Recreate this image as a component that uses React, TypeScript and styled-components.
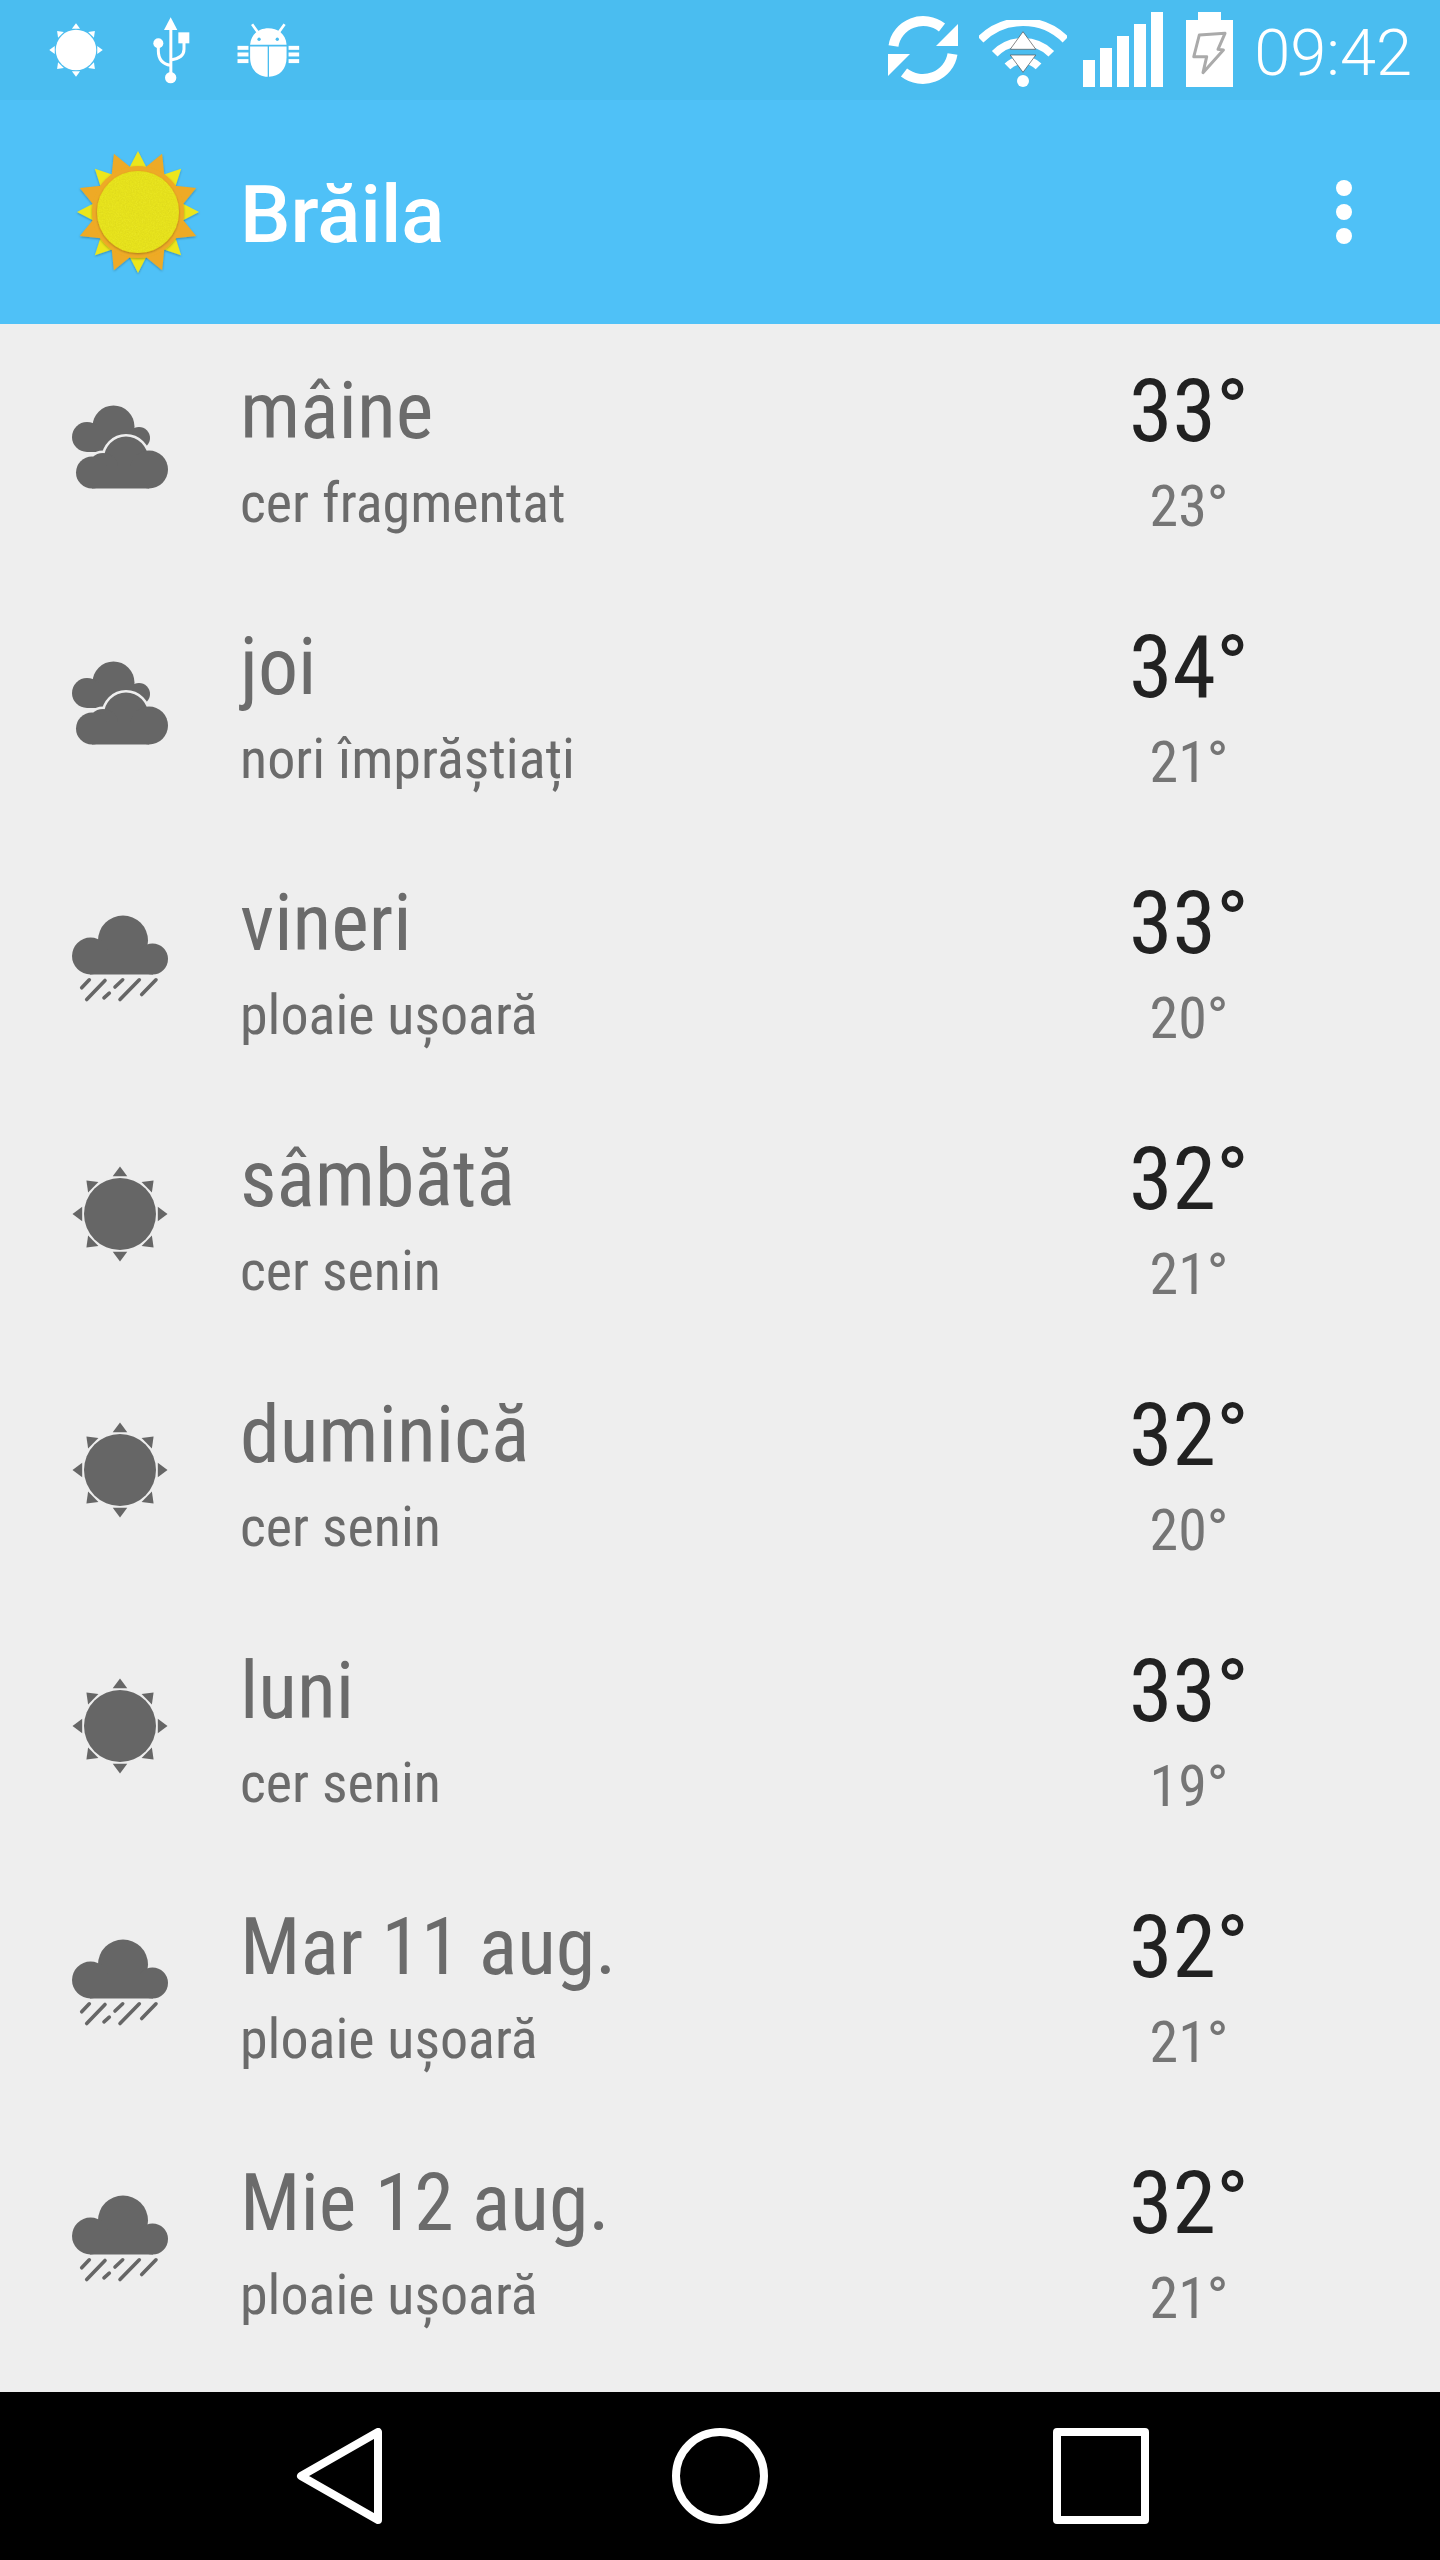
import React from 'react'
import styled, { createGlobalStyle } from 'styled-components'

const GlobalStyle = createGlobalStyle`
  html, body {
    margin: 0;
    padding: 0;
    background: #eeeeee;
  }
`

const Screen = styled.div`
  width: 1440px;
  height: 2560px;
  display: flex;
  flex-direction: column;
  background: #eeeeee;
  font-family: Roboto, "Liberation Sans", sans-serif;
  overflow: hidden;
`

const StatusBar = styled.div`
  height: 100px;
  flex: none;
  display: flex;
  justify-content: space-between;
  background: #4abdf0;
  padding: 0 28px 0 49px;
  color: #fff;
`

const LeftIcons = styled.div`
  display: flex;
  align-items: center;
  gap: 44px;
`

const RightIcons = styled.div`
  display: flex;
  align-items: flex-end;
  gap: 16px;
  padding-bottom: 13px;
`

const Clock = styled.span`
  font-size: 65px;
  font-weight: 300;
  line-height: 68px;
`

const AppBar = styled.div`
  height: 224px;
  flex: none;
  display: flex;
  align-items: center;
  background: #4fc1f7;
  padding: 0 88px 0 72px;
`

const Title = styled.h1`
  margin: 6px 0 0 36px;
  flex: 1;
  color: #fff;
  font-size: 80px;
  font-weight: 500;
`

const Overflow = styled.div`
  display: flex;
  flex-direction: column;
  gap: 8px;
`

const Dot = styled.span`
  width: 16px;
  height: 16px;
  border-radius: 50%;
  background: #fff;
`

const List = styled.div`
  flex: 1;
  display: flex;
  flex-direction: column;
`

const Row = styled.div`
  height: 256px;
  flex: none;
  display: flex;
  align-items: center;
  padding: 0 163px 0 72px;
`

const IconBox = styled.div`
  width: 96px;
  height: 96px;
  flex: none;
  margin-bottom: 13px;
  color: #666;
`

const TextCol = styled.div`
  flex: 1;
  margin: 2px 0 0 72px;
  display: flex;
  flex-direction: column;
  gap: 12px;
`

const Day = styled.div`
  color: #6b6b6b;
  font-size: 80px;
  line-height: 88px;
  font-stretch: 75%;
`

const Description = styled.div`
  color: #6b6b6b;
  font-size: 56px;
  line-height: 72px;
  font-stretch: 75%;
`

const TempCol = styled.div`
  width: 176px;
  margin-top: 3px;
  display: flex;
  flex-direction: column;
  align-items: center;
  gap: 13px;
  font-stretch: 75%;
`

const High = styled.div`
  color: #212121;
  font-size: 88px;
  line-height: 92px;
`

const Low = styled.div`
  color: #757575;
  font-size: 58px;
  line-height: 72px;
`

const NavBar = styled.div`
  height: 168px;
  flex: none;
  display: flex;
  justify-content: center;
  gap: 285px;
  padding-top: 36px;
  box-sizing: border-box;
  background: #000;
`

const spikes = (count: number, start: number, tip: number, base: number, half: number) => {
  const out: string[] = []
  for (let i = 0; i < count; i++) {
    const a = start + (i * 2 * Math.PI) / count
    const pt = (r: number, o: number) =>
      `${(r * Math.sin(a + o)).toFixed(2)},${(-r * Math.cos(a + o)).toFixed(2)}`
    out.push(`${pt(base, -half)} ${pt(tip, 0)} ${pt(base, half)}`)
  }
  return out
}

const SunIcon = ({ size = 96 }: { size?: number }) => (
  <svg width={size} height={size} viewBox="-48 -48 96 96" fill="currentColor">
    <circle r="36" />
    {spikes(8, 0, 47.5, 38.5, 0.19).map(p => <polygon key={p} points={p} />)}
  </svg>
)

const FrontCloud = () => (
  <>
    <circle cx="54" cy="60.5" r="22" />
    <circle cx="31" cy="70" r="15" />
    <circle cx="20" cy="74.5" r="16" />
    <circle cx="77" cy="71.5" r="19" />
    <rect x="20" y="68" width="57" height="22.5" />
  </>
)

const CloudsIcon = () => (
  <svg width="96" height="96" viewBox="0 0 96 96" fill="currentColor">
    <circle cx="41.5" cy="28.5" r="21" />
    <circle cx="15" cy="39" r="15" />
    <circle cx="67" cy="40" r="11" />
    <rect x="15" y="30" width="50" height="24" />
    <g stroke="#eeeeee" strokeWidth="5"><FrontCloud /></g>
    <FrontCloud />
  </svg>
)

const RainIcon = () => (
  <svg width="96" height="96" viewBox="0 0 96 96" fill="currentColor">
    <circle cx="51" cy="30.5" r="25" />
    <circle cx="18.5" cy="46" r="18.5" />
    <circle cx="80.5" cy="49" r="15.5" />
    <rect x="18" y="40" width="63" height="24.5" />
    <g stroke="currentColor" strokeWidth="3.6" strokeLinecap="round">
      <line x1="9.7" y1="77.8" x2="17.3" y2="69.8" />
      <line x1="14.7" y1="89.5" x2="33" y2="70.5" />
      <line x1="32" y1="87.8" x2="37.3" y2="83.2" />
      <line x1="43" y1="77" x2="50.7" y2="69.8" />
      <line x1="48" y1="89.5" x2="67.3" y2="69.8" />
      <line x1="69.7" y1="84.5" x2="84" y2="69.8" />
    </g>
  </svg>
)

const UsbIcon = () => (
  <svg width="46" height="70" viewBox="441 45 138 210" fill="#fff">
    <polygon points="512,52 532,90 492,90" />
    <rect x="508" y="88" width="9" height="145" />
    <circle cx="512" cy="233" r="17" />
    <circle cx="475" cy="130" r="15" />
    <rect x="535" y="97" width="33" height="33" />
    <path d="M475 135 V152 Q475 190 512 196 M552 128 V148 Q552 175 512 180" fill="none" stroke="#fff" strokeWidth="9" />
  </svg>
)

const BugIcon = () => (
  <svg width="65" height="58" viewBox="711 60 195 175" fill="#fff">
    <path d="M750 132 C752 98 778 82 805 82 C832 82 858 98 860 132 Z" />
    <path d="M750 137 H803 V228 C772 228 750 205 750 170 Z" />
    <path d="M807 137 H860 V170 C860 205 838 228 807 228 Z" />
    <path d="M756 70 L775 96 M854 70 L835 96" stroke="#fff" strokeWidth="8" />
    <circle cx="777" cy="115" r="5" fill="#4abdf0" />
    <circle cx="832" cy="115" r="5" fill="#4abdf0" />
    <rect x="712" y="135" width="33" height="12" />
    <rect x="712" y="155" width="33" height="12" />
    <rect x="712" y="175" width="33" height="12" />
    <rect x="866" y="135" width="32" height="12" />
    <rect x="866" y="155" width="32" height="12" />
    <rect x="866" y="175" width="32" height="12" />
  </svg>
)

const SyncHalf = () => (
  <>
    <path d="M5.5 30 A30 29 0 0 1 54 11.5" fill="none" stroke="#fff" strokeWidth="10" />
    <polygon points="70,8 70,30 48,30" />
  </>
)

const SyncIcon = () => (
  <svg width="75" height="71" viewBox="0 0 75 71" fill="#fff">
    <SyncHalf />
    <g transform="rotate(180 35 34)"><SyncHalf /></g>
  </svg>
)

const arc = (r: number) => {
  const d = r * Math.SQRT1_2
  return `M${44 - d} ${62 - d} A${r} ${r} 0 0 1 ${44 + d} ${62 - d}`
}

const WifiIcon = () => (
  <svg width="88" height="67" viewBox="0 0 88 67" fill="#fff">
    {[60, 40, 22].map(r => <path key={r} d={arc(r)} fill="none" stroke="#fff" strokeWidth="8" />)}
    <circle cx="44" cy="61" r="6" />
    <polygon points="44,11.7 56.8,29.3 31.2,29.3" stroke="#555" strokeWidth="0.7" />
    <polygon points="31.2,35 56.8,35 44,52.3" stroke="#555" strokeWidth="0.7" />
  </svg>
)

const SignalIcon = () => (
  <svg width="87" height="75" viewBox="0 0 87 75" fill="#fff">
    {[48, 36, 24, 12, 0].map((top, i) => (
      <rect key={top} x={i * 17} y={top} width="12" height={75 - top} />
    ))}
  </svg>
)

const BatteryIcon = () => (
  <svg width="52" height="75" viewBox="0 0 52 75" fill="#fff">
    <rect x="12" y="0" width="23" height="9" />
    <rect x="0" y="8" width="47" height="67" />
    <polygon
      points="13.3,23 39,21.3 32,37.3 37.4,38 17,60.7 20.7,44.7 7.8,44.7"
      stroke="#aaa"
      strokeWidth="3"
      strokeLinejoin="round"
    />
  </svg>
)

const FeltSun = () => (
  <svg width="132" height="132" viewBox="-66 -66 132 132">
    <defs>
      <filter id="felt" x="-20%" y="-20%" width="140%" height="140%">
        <feDropShadow dx="0" dy="1" stdDeviation="1" floodColor="#000" floodOpacity="0.3" />
      </filter>
      <filter id="grain" x="0" y="0" width="100%" height="100%">
        <feTurbulence type="fractalNoise" baseFrequency="0.7" numOctaves="2" seed="3" />
        <feColorMatrix values="0 0 0 0 0.55  0 0 0 0 0.5  0 0 0 0 0  0 0 0 0.5 -0.16" />
        <feComposite in2="SourceGraphic" operator="in" />
        <feMerge>
          <feMergeNode in="SourceGraphic" />
          <feMergeNode />
        </feMerge>
      </filter>
    </defs>
    <g filter="url(#felt)">
      {spikes(8, 0, 61, 42, 0.25).map(p => <polygon key={p} points={p} fill="#ece61f" />)}
    </g>
    <g filter="url(#felt)">
      {spikes(8, Math.PI / 8, 63, 42, 0.3).map(p => <polygon key={p} points={p} fill="#eeaa25" />)}
      <circle r="46" fill="#eeaa25" />
    </g>
    <g filter="url(#felt)">
      <circle r="41" fill="#e8e420" filter="url(#grain)" />
    </g>
  </svg>
)

const BackIcon = () => (
  <svg width="96" height="96" viewBox="0 0 96 96" fill="none" stroke="#fff" strokeWidth="8" strokeLinejoin="round">
    <path d="M10 48 L87 4 V92 Z" />
  </svg>
)

const HomeIcon = () => (
  <svg width="96" height="96" viewBox="0 0 96 96" fill="none" stroke="#fff" strokeWidth="8">
    <circle cx="48" cy="48" r="44" />
  </svg>
)

const RecentIcon = () => (
  <svg width="96" height="96" viewBox="0 0 96 96" fill="none" stroke="#fff" strokeWidth="8" strokeLinejoin="round">
    <rect x="4" y="4" width="88" height="88" />
  </svg>
)

const forecast = [
  { day: 'mâine', text: 'cer fragmentat', high: 33, low: 23, icon: CloudsIcon },
  { day: 'joi', text: 'nori împrăștiați', high: 34, low: 21, icon: CloudsIcon },
  { day: 'vineri', text: 'ploaie ușoară', high: 33, low: 20, icon: RainIcon },
  { day: 'sâmbătă', text: 'cer senin', high: 32, low: 21, icon: SunIcon },
  { day: 'duminică', text: 'cer senin', high: 32, low: 20, icon: SunIcon },
  { day: 'luni', text: 'cer senin', high: 33, low: 19, icon: SunIcon },
  { day: 'Mar 11 aug.', text: 'ploaie ușoară', high: 32, low: 21, icon: RainIcon },
  { day: 'Mie 12 aug.', text: 'ploaie ușoară', high: 32, low: 21, icon: RainIcon },
]

const App = () => (
  <Screen>
    <GlobalStyle />
    <StatusBar>
      <LeftIcons>
        <SunIcon size={54} />
        <UsbIcon />
        <BugIcon />
      </LeftIcons>
      <RightIcons>
        <SyncIcon />
        <WifiIcon />
        <SignalIcon />
        <BatteryIcon />
        <Clock>09:42</Clock>
      </RightIcons>
    </StatusBar>
    <AppBar>
      <FeltSun />
      <Title>Brăila</Title>
      <Overflow>
        <Dot />
        <Dot />
        <Dot />
      </Overflow>
    </AppBar>
    <List>
      {forecast.map(({ day, text, high, low, icon: Icon }) => (
        <Row key={day}>
          <IconBox><Icon /></IconBox>
          <TextCol>
            <Day>{day}</Day>
            <Description>{text}</Description>
          </TextCol>
          <TempCol>
            <High>{high}°</High>
            <Low>{low}°</Low>
          </TempCol>
        </Row>
      ))}
    </List>
    <NavBar>
      <BackIcon />
      <HomeIcon />
      <RecentIcon />
    </NavBar>
  </Screen>
)

export default App
